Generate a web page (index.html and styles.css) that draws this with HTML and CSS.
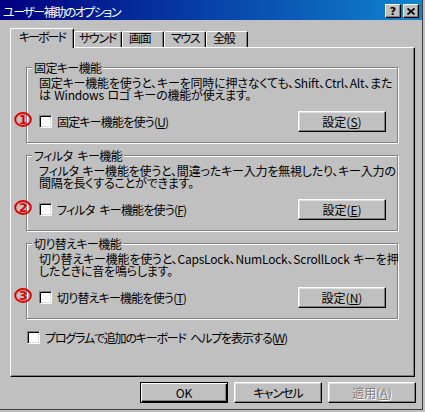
FILE: index.html
```html
<!DOCTYPE html>
<html lang="ja">
<head>
<meta charset="utf-8">
<title>ユーザー補助のオプション</title>
<link rel="stylesheet" href="styles.css">
</head>
<body>
<div class="window">
  <div class="titlebar">
    <span class="title">ユーザー補助のオプション</span>
    <div class="title-buttons">
      <span class="tbtn tbtn-help">?</span>
      <span class="tbtn"><svg class="close-icon" width="8" height="7" viewBox="0 0 8 7"><path d="M0.5 0.5 L7.5 6.5 M7.5 0.5 L0.5 6.5"/></svg></span>
    </div>
  </div>

  <div class="tabs">
    <div class="tab tab-active">キーボード</div>
    <div class="tab tab-wide">サウンド</div>
    <div class="tab">画面</div>
    <div class="tab">マウス</div>
    <div class="tab">全般</div>
  </div>

  <div class="panel">
    <div class="group">
      <span class="group-title">固定キー機能</span>
      <svg class="mark" width="18" height="15" viewBox="0 0 18 15"><ellipse cx="9" cy="7.5" rx="7.8" ry="6.4"/><text x="9.2" y="11.8">1</text></svg>
      <p class="desc">固定キー機能を使うと、キーを同時に押さなくても、Shift、Ctrl、Alt、また<br>は Windows ロゴ キーの機能が使えます。</p>
      <div class="row">
        <label class="check"><span class="box"></span><span class="check-text">固定キー機能を使う(<u>U</u>)</span></label>
        <span class="btn">設定(<u>S</u>)</span>
      </div>
    </div>

    <div class="group">
      <span class="group-title">フィルタ キー機能</span>
      <svg class="mark" width="18" height="15" viewBox="0 0 18 15"><ellipse cx="9" cy="7.5" rx="7.8" ry="6.4"/><text x="9.2" y="11.8">2</text></svg>
      <p class="desc">フィルタ キー機能を使うと、間違ったキー入力を無視したり、キー入力の<br>間隔を長くすることができます。</p>
      <div class="row">
        <label class="check"><span class="box"></span><span class="check-text">フィルタ キー機能を使う(<u>F</u>)</span></label>
        <span class="btn">設定(<u>E</u>)</span>
      </div>
    </div>

    <div class="group">
      <span class="group-title">切り替えキー機能</span>
      <svg class="mark" width="18" height="15" viewBox="0 0 18 15"><ellipse cx="9" cy="7.5" rx="7.8" ry="6.4"/><text x="9.2" y="11.8">3</text></svg>
      <p class="desc">切り替えキー機能を使うと、CapsLock、NumLock、ScrollLock キーを押<br>したときに音を鳴らします。</p>
      <div class="row">
        <label class="check"><span class="box"></span><span class="check-text">切り替えキー機能を使う(<u>T</u>)</span></label>
        <span class="btn">設定(<u>N</u>)</span>
      </div>
    </div>

    <label class="check check-extra"><span class="box"></span><span class="check-text check-text-long">プログラムで追加のキーボード ヘルプを表示する(<u>W</u>)</span></label>
  </div>

  <div class="actions">
    <span class="btn btn-default">OK</span>
    <span class="btn btn-tight">キャンセル</span>
    <span class="btn btn-disabled">適用(<u>A</u>)</span>
  </div>
</div>
</body>
</html>
```

FILE: styles.css
```css
* {
  box-sizing: border-box;
}

body {
  margin: 0;
  background: #c0c0c0;
  font-family: "Noto Sans CJK JP", "Noto Sans", sans-serif;
  font-size: 12px;
  line-height: 12px;
  color: #000;
  font-feature-settings: "palt" 1;
}

.window {
  width: 423px;
  height: 410px;
  border-right: 1px solid #404040;
  border-bottom: 1px solid #404040;
}

/* title bar */
.titlebar {
  display: flex;
  align-items: flex-start;
  height: 20px;
  padding-left: 3px;
  background: linear-gradient(to right, #000080, #1084d0);
  color: #fff;
}

.title {
  margin-top: 6px;
  letter-spacing: -1.5px;
  white-space: nowrap;
}

.title-buttons {
  display: flex;
  gap: 2px;
  margin: 4px 3px 0 auto;
}

.tbtn {
  display: flex;
  align-items: center;
  justify-content: center;
  width: 16px;
  height: 14px;
  background: #c0c0c0;
  border: 1px solid;
  border-color: #fff #000 #000 #fff;
  box-shadow: inset -1px -1px #808080;
  color: #000;
}

.tbtn-help {
  font-family: "DejaVu Sans", sans-serif;
  font-weight: bold;
  font-size: 11px;
  line-height: 11px;
}

.close-icon path {
  stroke: #000;
  stroke-width: 1.7;
  fill: none;
}

/* tabs */
.tabs {
  display: flex;
  align-items: flex-end;
  height: 19px;
  margin: 8px 0 0 10px;
}

.tab {
  position: relative;
  width: 42px;
  height: 16px;
  padding-left: 6px;
  border-top: 1px solid #fff;
  border-left: 1px solid #fff;
  border-right: 1px solid #000;
  border-radius: 2px 2px 0 0;
  box-shadow: inset -1px 0 #808080;
  letter-spacing: -1.3px;
  white-space: nowrap;
}

.tab-wide {
  width: 48px;
  padding-left: 4px;
}

.tab-active {
  z-index: 1;
  width: 64px;
  height: 20px;
  margin-bottom: -1px;
  padding: 2px 0 0 8px;
  background: #c0c0c0;
  letter-spacing: -2px;
}

/* panel */
.panel {
  width: 405px;
  height: 330px;
  margin-left: 10px;
  padding: 19px 16px 0 15px;
  border: 1px solid;
  border-color: #fff #000 #000 #fff;
  box-shadow: inset -1px -1px #808080;
}

.group {
  position: relative;
  height: 76px;
  margin-bottom: 12px;
  padding: 9px 11px 0 12px;
  border: 1px solid #808080;
  box-shadow: inset 1px 1px #fff, 1px 1px #fff;
}

.group-title {
  position: absolute;
  top: -6px;
  left: 5px;
  padding: 0 2px;
  background: #c0c0c0;
  letter-spacing: -0.6px;
  word-spacing: 3px;
  white-space: nowrap;
}

.mark {
  position: absolute;
  top: 44px;
  left: -13px;
}

.mark ellipse {
  fill: none;
  stroke: #e00000;
  stroke-width: 2;
}

.mark text {
  fill: #e00000;
  font-family: "DejaVu Sans", sans-serif;
  font-weight: bold;
  font-size: 12px;
  text-anchor: middle;
}

.desc {
  margin: 0;
  letter-spacing: -0.2px;
  word-spacing: 1px;
  white-space: nowrap;
}

.row {
  display: flex;
  align-items: center;
  justify-content: space-between;
  height: 21px;
  margin-top: 10px;
}

.check {
  display: flex;
  align-items: center;
  gap: 5px;
  white-space: nowrap;
}

.check-text {
  letter-spacing: -0.8px;
  word-spacing: 3px;
}

.check-text-long {
  letter-spacing: -1.2px;
}

.box {
  width: 13px;
  height: 13px;
  flex: none;
  background: #fff;
  border: 1px solid;
  border-color: #808080 #fff #fff #808080;
  box-shadow: inset 1px 1px #000, inset -1px -1px #dfdfdf;
}

.check-extra {
  margin: 1px 0 0 1px;
}

/* buttons */
.btn {
  display: flex;
  align-items: center;
  justify-content: center;
  width: 88px;
  height: 21px;
  border: 1px solid;
  border-color: #fff #000 #000 #fff;
  box-shadow: inset -1px -1px #808080, inset 1px 1px #dfdfdf;
  white-space: nowrap;
}

.btn-tight {
  letter-spacing: -1px;
}

.btn-default {
  border-color: #000;
  box-shadow: inset 1px 1px #fff, inset -1px -1px #000, inset -2px -2px #808080;
}

.btn-disabled {
  color: #808080;
  text-shadow: 1px 1px #fff;
}

.actions {
  display: flex;
  justify-content: flex-end;
  gap: 6px;
  margin-top: 5px;
  padding-right: 6px;
}
```
